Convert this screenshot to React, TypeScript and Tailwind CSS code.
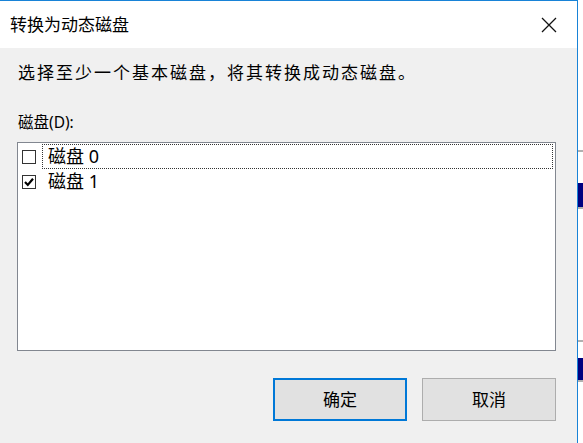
import React, { useState } from "react";

const font = {
  fontFamily: '"Noto Sans", "Noto Sans CJK SC", sans-serif',
};

const Check = ({ on }: { on: boolean }) => (
  <span className="w-[14px] h-[14px] border border-[#333333] bg-white flex items-center justify-center shrink-0">
    {on && (
      <svg width="10" height="10" viewBox="0 0 10 10">
        <path d="M1 5 L3.8 7.9 L9 1.8" fill="none" stroke="#000" strokeWidth="2.2" />
      </svg>
    )}
  </span>
);

const App: React.FC = () => {
  const [disks, setDisks] = useState([false, true]);

  return (
    <div className="w-[583px] h-[443px] flex bg-white overflow-hidden" style={font}>
      {/* dialog window */}
      <div className="w-[578px] h-full flex flex-col border-t border-r border-[#1883d7] bg-[#f0f0f0]">
        {/* title bar */}
        <div className="h-[47px] bg-white flex items-center justify-between pl-[10px] pr-[20px]">
          <span className="text-[17px] text-black">转换为动态磁盘</span>
          <svg width="16" height="16" viewBox="0 0 16 16">
            <path d="M1 1 L15 15 M15 1 L1 15" stroke="#111" strokeWidth="1.3" />
          </svg>
        </div>

        {/* body */}
        <div className="flex-1 flex flex-col px-[17px] pt-[13px]">
          <p className="text-[17px] leading-[24px] tracking-[2px] text-black pl-[1px]">
            选择至少一个基本磁盘，将其转换成动态磁盘。
          </p>
          <p className="mt-[25px] text-[15.5px] leading-[24px] text-black pl-[1px]">磁盘(D):</p>

          <div className="mt-[8px] w-[539px] h-[209px] border border-[#828790] bg-white pt-[1px] pl-[4px] pr-[2px]">
            {["磁盘 0", "磁盘 1"].map((label, i) => (
              <div
                key={label}
                className="h-[25px] flex items-center gap-[6px] cursor-default"
                onClick={() => setDisks(disks.map((d, j) => (j === i ? !d : d)))}
              >
                <Check on={disks[i]} />
                <span
                  className={
                    "flex-1 h-full flex items-center pl-[5px] text-[18px] text-black " +
                    (i === 0 ? "border border-dotted border-[#333333]" : "border border-transparent")
                  }
                >
                  {label}
                </span>
              </div>
            ))}
          </div>

          {/* buttons */}
          <div className="mt-[27px] flex justify-end gap-[15px] pr-[4px]">
            <button className="w-[134px] h-[43px] border-2 border-[#0078d7] bg-[#e1e1e1] text-[17px] text-black">
              确定
            </button>
            <button className="w-[134px] h-[43px] border border-[#adadad] bg-[#e1e1e1] text-[17px] text-black">
              取消
            </button>
          </div>
        </div>
      </div>

      {/* window behind, peeking at right edge */}
      <div className="flex-1 flex flex-col">
        <div className="h-[150px]" />
        <div className="h-[2px] bg-[#b0b0b0]" />
        <div className="h-[31px]" />
        <div className="h-[24px] bg-[#000080]" />
        <div className="h-[2px] bg-[#b0b0b0]" />
        <div className="h-[131px]" />
        <div className="h-[2px] bg-[#b0b0b0]" />
        <div className="h-[16px]" />
        <div className="h-[22px] bg-[#000080]" />
        <div className="h-[2px] bg-[#b0b0b0]" />
      </div>
    </div>
  );
};

export default App;
